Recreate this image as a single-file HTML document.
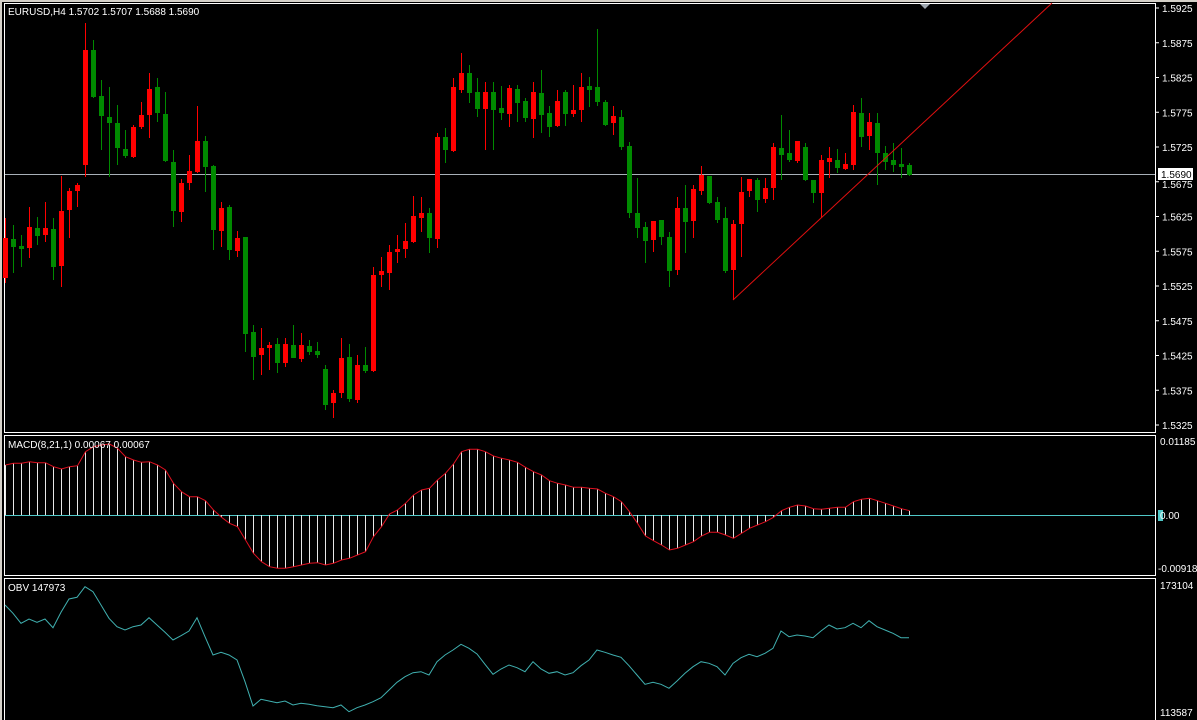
<!DOCTYPE html>
<html><head><meta charset="utf-8"><style>
html,body{margin:0;padding:0;background:#000;width:1197px;height:720px;overflow:hidden}
svg{display:block}
text{font-family:"Liberation Sans",sans-serif;font-size:10px;fill:#fff}
</style></head><body>
<svg id="s" width="1197" height="720" xmlns="http://www.w3.org/2000/svg">
<rect x="0" y="0" width="1197" height="720" fill="#000"/>
<rect x="0" y="0" width="1197" height="2" fill="#d4d0c8"/>
<rect x="0" y="0" width="2" height="720" fill="#d4d0c8"/>
<g fill="none" stroke="#fff" stroke-width="1">
<rect x="4.5" y="3.5" width="1151" height="429"/>
<rect x="4.5" y="435.5" width="1151" height="140"/>
<rect x="4.5" y="578.5" width="1151" height="145"/>
</g>
<line x1="5" y1="174.5" x2="1155" y2="174.5" stroke="#a8b0b8"/>
<line x1="5" y1="515.5" x2="1155" y2="515.5" stroke="#50c8c8"/>
<g id="c"></g>
<line x1="733" y1="300" x2="1052" y2="3" stroke="#e01010"/>
<polygon points="920,4 930,4 925,9" fill="#a0a8b0"/>
<text x="8" y="15">EURUSD,H4  1.5702 1.5707 1.5688 1.5690</text>
<text x="8" y="448">MACD(8,21,1) 0.00067 0.00067</text>
<text x="8" y="591">OBV 147973</text>
<g id="ax"></g>
<rect x="1158" y="168" width="35" height="12" fill="#fff"/>
<text x="1161" y="178" style="fill:#000">1.5690</text>
<text x="1160" y="445">0.01185</text>
<rect x="1158" y="510" width="5" height="11" fill="#50c8c8"/>
<text x="1160" y="519">0.00</text>
<text x="1158" y="572">-0.00918</text>
<text x="1160" y="589">173104</text>
<text x="1160" y="716">113587</text>
</svg>
<script>
var C=[
['r',238,278,218,283],['g',239,247,225,273],['g',246,249,235,267],['r',227,248,207,258],['g',228,236,217,245],
['r',228,235,202,242],['g',229,267,218,280],['r',211,266,176,287],['r',191,210,188,238],['r',185,191,183,207],
['r',50,165,23,177],['g',50,97,40,98],['g',96,116,80,150],['g',117,123,87,177],['g',123,148,105,165],
['g',149,156,130,158],['r',127,157,125,158],['r',115,127,102,129],['r',89,115,73,138],['g',87,113,78,122],
['g',114,161,92,162],['g',162,211,150,227],['r',183,212,179,222],['r',171,183,155,190],['r',141,172,106,173],
['g',141,167,136,192],['g',166,230,165,250],['r',208,231,202,247],['g',207,250,205,260],['r',238,251,231,257],
['g',237,334,237,352],['g',332,357,325,380],['r',348,355,328,375],['r',345,348,342,370],['g',344,363,338,373],
['r',344,363,338,367],['g',345,358,325,358],['r',345,359,333,362],['g',346,352,340,355],['g',351,355,342,358],
['g',369,405,365,410],['r',393,403,390,418],['r',358,393,338,398],['g',357,399,344,402],['r',365,400,355,403],
['g',365,371,347,373],['r',275,371,267,372],['r',271,275,257,287],['r',252,273,245,290],['r',249,252,235,263],
['r',241,249,223,258],['r',216,242,196,243],['r',213,218,197,232],['g',213,238,208,253],['r',137,239,133,248],
['g',137,150,128,163],['r',87,151,78,152],['r',73,90,53,93],['g',73,93,65,103],['g',92,109,78,117],
['r',92,109,82,150],['g',92,110,82,150],['g',108,113,86,120],['r',88,114,85,127],['g',89,103,85,122],
['g',101,118,98,122],['r',92,119,82,138],['g',93,115,70,133],['g',113,127,106,137],['r',101,126,90,127],
['g',92,114,90,126],['r',110,114,85,117],['r',87,110,73,122],['g',86,90,77,107],['g',87,102,29,106],
['g',102,125,100,126],['r',116,123,106,135],['g',117,147,110,150],['g',146,213,142,218],['g',213,228,178,238],
['g',227,241,222,263],['r',221,240,221,252],['g',220,237,220,245],['g',237,271,232,287],['r',208,270,197,275],
['g',208,222,185,253],['r',189,221,185,238],['r',175,191,166,195],['g',176,203,176,204],['g',202,220,197,223],
['g',218,271,207,273],['r',224,270,220,300],['r',192,224,177,257],['r',179,191,179,197],['g',180,200,178,212],
['r',188,199,178,203],['r',147,188,143,200],['g',148,155,115,180],['g',153,160,130,162],['r',141,161,141,163],
['g',147,180,143,181],['g',180,193,180,203],['r',160,193,155,218],['r',158,162,147,178],['g',160,168,149,173],
['r',164,169,153,170],['r',112,165,105,170],['g',113,137,98,147],['r',122,136,113,150],['g',123,153,113,185],
['g',153,162,146,170],['g',160,165,143,172],['g',164,167,148,178],['g',165,175,163,176]];
var M1=[105,100,100,95,98,98,110,117,110,107,65,50,45,42,55,80,90,97,95,105,120,160,185,200,200,212,240,262,280,290,330,370,395,410,415,415,410,405,400,398,405,400,390,385,375,365,320,290,252,240,220,195,180,175,150,130,102,65,58,58,65,78,85,90,97,112,125,135,152,160,165,172,172,175,177,190,200,215,245,280,318,332,345,360,355,345,335,318,307,307,315,325,310,295,285,275,262,242,232,225,228,236,238,235,232,232,215,208,205,212,220,228,236,242];
var O=[90,115,145,132,142,132,158,112,72,67,35,50,90,130,155,165,155,150,128,150,172,195,182,168,128,185,240,232,240,255,320,393,373,378,383,378,390,385,388,392,395,398,390,410,398,390,380,368,345,322,305,293,290,300,260,240,225,208,220,237,268,298,282,270,278,290,260,282,295,290,300,293,272,255,225,232,240,247,272,300,328,322,328,340,318,295,275,260,265,275,300,265,248,238,245,235,220,168,185,180,183,188,168,150,162,158,145,158,137,155,165,175,188,188];
var NS="http://www.w3.org/2000/svg",s="";
for(var i=0;i<C.length;i++){var c=C[i],x=5+8*i,col=c[0]=='r'?'#ff0000':'#008a00';
s+='<rect x="'+x+'" y="'+c[3]+'" width="1" height="'+(c[4]-c[3])+'" fill="'+col+'"/>';
s+='<rect x="'+(x-2)+'" y="'+c[1]+'" width="5" height="'+Math.max(2,c[2]-c[1])+'" fill="'+col+'"/>';}
var p="";
for(i=0;i<M1.length;i++){var x=5+8*i+0.5,y=430+M1[i]/3;s+='<line x1="'+x+'" y1="515" x2="'+x+'" y2="'+y.toFixed(1)+'" stroke="#e8e8e8"/>';p+=(i?'L':'M')+x+' '+y.toFixed(1);}
s+='<path d="'+p+'" fill="none" stroke="#e01020"/>';
p="";for(i=0;i<O.length;i++){p+=(i?'L':'M')+(5+8*i)+' '+(575+O[i]/3).toFixed(1);}
s+='<path d="'+p+'" fill="none" stroke="#40b0b0"/>';
document.getElementById('c').innerHTML=s;
var labs=["1.5925","1.5875","1.5825","1.5775","1.5725","1.5675","1.5625","1.5575","1.5525","1.5475","1.5425","1.5375","1.5325"],a="";
for(i=0;i<labs.length;i++){var y=8+i*34.75;a+='<line x1="1156" y1="'+y+'" x2="1159" y2="'+y+'" stroke="#fff"/>';
if(i!=5)a+='<text x="1162" y="'+(y+4)+'">'+labs[i]+'</text>';else a+='<text x="1162" y="'+(y+6)+'">'+labs[i]+'</text>';}
document.getElementById('ax').innerHTML=a;
</script>
</body></html>
